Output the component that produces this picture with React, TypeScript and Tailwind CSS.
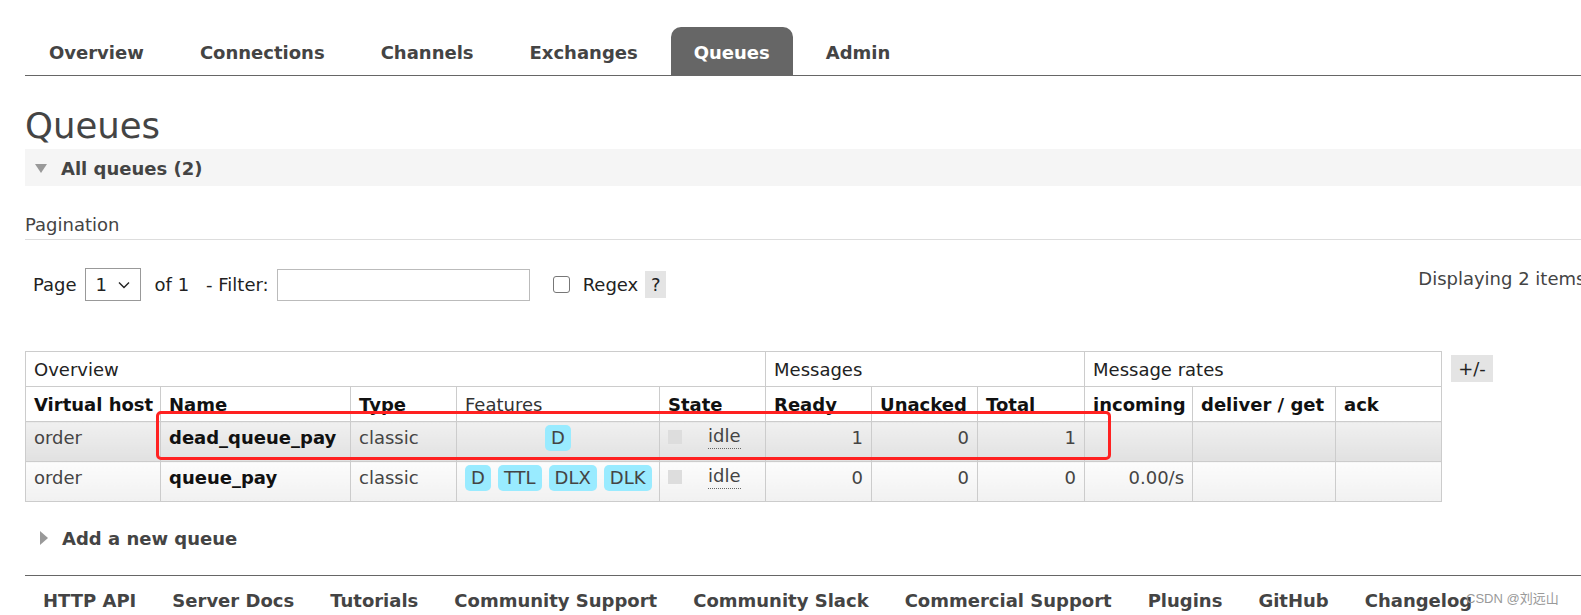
import React from 'react'

const font = { fontFamily: '"DejaVu Sans", Verdana, sans-serif' }

const navItems = ['Overview', 'Connections', 'Channels', 'Exchanges', 'Queues', 'Admin']
const footerLinks = [
  'HTTP API',
  'Server Docs',
  'Tutorials',
  'Community Support',
  'Community Slack',
  'Commercial Support',
  'Plugins',
  'GitHub',
  'Changelog',
]

const Pill = ({ label }: { label: string }) => (
  <span className="inline-block rounded-[5px] bg-[#99ebff] px-[6px] leading-[26px] text-[#444]">
    {label}
  </span>
)

const State = () => (
  <div className="flex items-start gap-[26px]">
    <span className="mt-[6px] block h-[14px] w-[14px] shrink-0 bg-[#dddddd]" />
    <span className="border-b border-dotted border-[#666] leading-[24px]">idle</span>
  </div>
)

type Row = {
  vhost: string
  name: string
  features: string[]
  ready: string
  unacked: string
  total: string
  incoming: string
  dark: boolean
}

const rows: Row[] = [
  { vhost: 'order', name: 'dead_queue_pay', features: ['D'], ready: '1', unacked: '0', total: '1', incoming: '', dark: true },
  { vhost: 'order', name: 'queue_pay', features: ['D', 'TTL', 'DLX', 'DLK'], ready: '0', unacked: '0', total: '0', incoming: '0.00/s', dark: false },
]

export default function App() {
  const th = 'border border-[#cccccc] px-[8px] text-left font-bold text-[#111] whitespace-nowrap'
  const grp = 'border border-[#cccccc] px-[8px] text-left font-normal text-[#222]'
  return (
    <div className="h-[615px] w-full overflow-hidden bg-white text-[18px] text-[#444]" style={font}>
      <div className="relative w-[1700px] pt-[27px]">
        {/* top nav */}
        <ul className="ml-[25px] flex h-[49px] gap-[10px] border-b-[1.5px] border-[#666] pl-[1px]">
          {navItems.map((n) => (
            <li
              key={n}
              className={
                'flex h-[48px] items-center px-[23px] pt-[2px] font-bold ' +
                (n === 'Queues' ? 'rounded-t-[10px] bg-[#666666] text-white' : 'text-[#444]')
              }
            >
              {n}
            </li>
          ))}
        </ul>

        <div className="px-[25px]">
          <h1 className="mt-[26px] h-[47px] text-[35.5px] font-normal leading-[47px] text-[#444]">Queues</h1>

          <div className="flex h-[37px] items-center bg-[#f5f5f5] pl-[10px] pt-[2px] font-bold">
            <span className="mr-[14px] h-0 w-0 border-x-[6.5px] border-t-[9px] border-x-transparent border-t-[#999]" />
            All queues (2)
          </div>

          <div className="mt-[28px] border-b border-[#dddddd] pb-[3px] leading-[22px]">Pagination</div>

          <div className="mt-[28px] flex h-[33px] items-center whitespace-nowrap text-[#222]">
            <span className="ml-[8px] shrink-0">Page</span>
            <div className="ml-[8px] flex h-[33px] w-[56px] shrink-0 items-center justify-between border border-[#999] px-[10px]">
              <span>1</span>
              <svg width="12" height="8" viewBox="0 0 12 8">
                <path d="M1 1.5l5 5 5-5" fill="none" stroke="#222" strokeWidth="1.4" />
              </svg>
            </div>
            <span className="ml-[14px] shrink-0">of 1</span>
            <span className="ml-[17px] shrink-0">- Filter:</span>
            <div className="ml-[8px] h-[32px] w-[253px] shrink-0 border border-[#bbbbbb]" />
            <span className="ml-[23px] h-[17px] w-[17px] shrink-0 rounded-[3px] border border-[#777]" />
            <span className="ml-[13px] shrink-0">Regex</span>
            <span className="ml-[7px] flex h-[27px] w-[21px] shrink-0 items-center justify-center bg-[#e4e4e4]">?</span>
            <span className="-mt-[12px] ml-[752px] shrink-0 text-[#444]">Displaying 2 items</span>
          </div>

          {/* table */}
          <div className="mt-[50px] flex items-start gap-[9px]">
            <div className="relative shrink-0">
              <table className="w-[1416px] table-fixed border-collapse">
                <colgroup>
                  <col className="w-[135px]" />
                  <col className="w-[190px]" />
                  <col className="w-[106px]" />
                  <col className="w-[203px]" />
                  <col className="w-[106px]" />
                  <col className="w-[106px]" />
                  <col className="w-[106px]" />
                  <col className="w-[107px]" />
                  <col className="w-[108px]" />
                  <col className="w-[143px]" />
                  <col className="w-[106px]" />
                </colgroup>
                <thead>
                  <tr className="h-[35px]">
                    <th colSpan={5} className={grp}>Overview</th>
                    <th colSpan={3} className={grp}>Messages</th>
                    <th colSpan={3} className={grp}>Message rates</th>
                  </tr>
                  <tr className="h-[35px]">
                    <th className={th}>Virtual host</th>
                    <th className={th}>Name</th>
                    <th className={th}>Type</th>
                    <th className={th + ' font-normal text-[#333]'}>Features</th>
                    <th className={th}>State</th>
                    <th className={th}>Ready</th>
                    <th className={th}>Unacked</th>
                    <th className={th}>Total</th>
                    <th className={th}>incoming</th>
                    <th className={th}>deliver / get</th>
                    <th className={th}>ack</th>
                  </tr>
                </thead>
                <tbody>
                  {rows.map((r) => {
                    const td =
                      'border border-[#cccccc] px-[8px] align-top pt-[2px] whitespace-nowrap ' +
                      (r.dark
                        ? 'bg-linear-to-b from-[#f0f0f0] to-[#e1e1e1]'
                        : 'bg-linear-to-b from-[#fcfcfc] to-[#f1f1f1]')
                    return (
                      <tr key={r.name} className="h-[40px]">
                        <td className={td}>{r.vhost}</td>
                        <td className={td + ' font-bold text-[#111]'}>{r.name}</td>
                        <td className={td}>classic</td>
                        <td className={td + ' pt-[3px]'}>
                          <div className={'flex gap-[7px] ' + (r.features.length === 1 ? 'justify-center' : '')}>
                            {r.features.map((f) => (
                              <Pill key={f} label={f} />
                            ))}
                          </div>
                        </td>
                        <td className={td}>
                          <State />
                        </td>
                        <td className={td + ' text-right'}>{r.ready}</td>
                        <td className={td + ' text-right'}>{r.unacked}</td>
                        <td className={td + ' text-right'}>{r.total}</td>
                        <td className={td + ' text-right'}>{r.incoming}</td>
                        <td className={td} />
                        <td className={td} />
                      </tr>
                    )
                  })}
                </tbody>
              </table>
              {/* red highlight box */}
              <div className="absolute left-[131px] top-[60px] h-[49px] w-[955px] rounded-[5px] border-[3px] border-[#ff2121]" />
            </div>
            <span className="mt-[4px] flex h-[27px] w-[42px] shrink-0 items-center justify-center bg-[#e4e4e4] text-[#222]">+/-</span>
          </div>

          <div className="mt-[24px] flex h-[24px] items-center pl-[15px] font-bold">
            <span className="mr-[14px] h-0 w-0 border-y-[7px] border-l-[8px] border-y-transparent border-l-[#999]" />
            Add a new queue
          </div>

          <div className="mt-[25px] border-t-[1.5px] border-[#666]">
            <div className="flex gap-[36px] pl-[18px] pt-[11px] font-bold text-[#444]">
              {footerLinks.map((l) => (
                <span key={l} className="whitespace-nowrap">
                  {l}
                </span>
              ))}
            </div>
          </div>
        </div>

        <span
          className="absolute left-[1466px] top-[589px] text-[13px] text-[#999]"
          style={{ fontFamily: '"Liberation Sans", "Noto Sans CJK SC", sans-serif' }}
        >
          CSDN @刘远山
        </span>
      </div>
    </div>
  )
}
